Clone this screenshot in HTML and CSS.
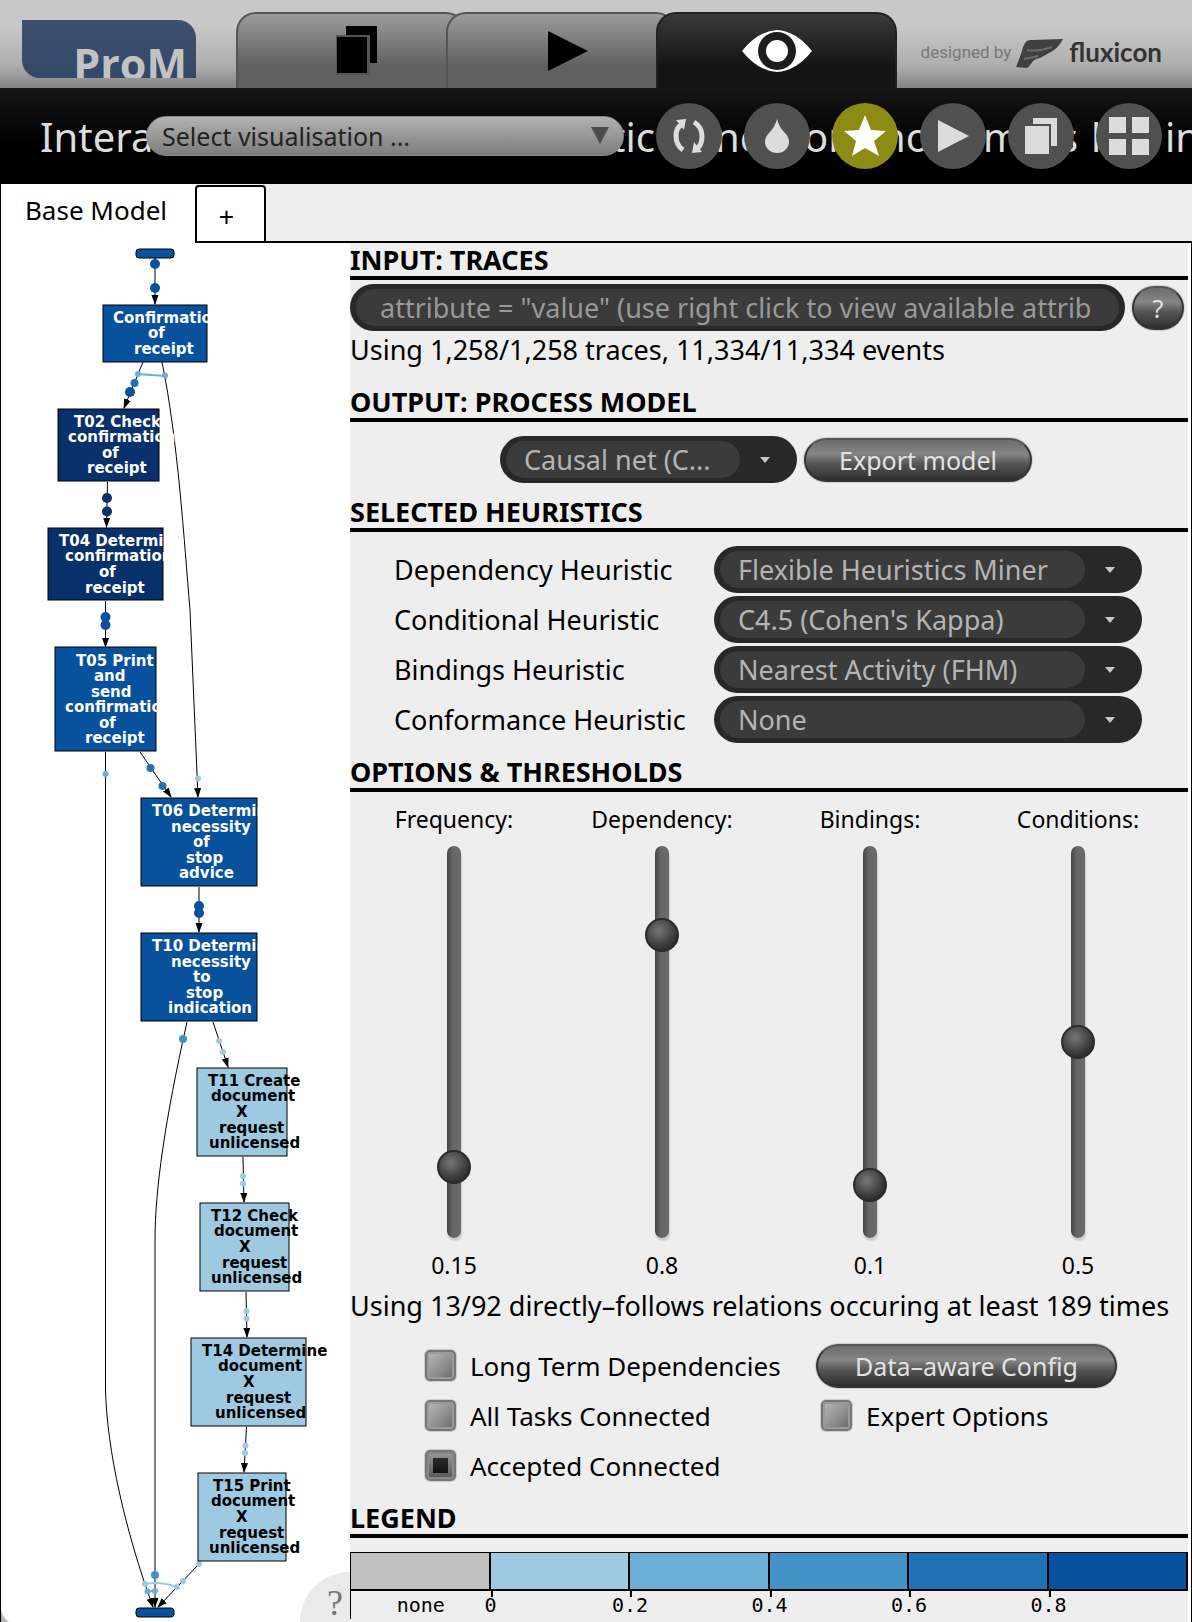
FILE: index.html
```html
<!DOCTYPE html>
<html lang="en">
<head>
<meta charset="utf-8">
<title>ProM</title>
<link rel="stylesheet" href="styles.css">
</head>
<body>
<header class="top">
  <div class="logo"><span>ProM</span></div>
  <nav class="views">
    <button class="view" aria-label="Workspace">
      <svg width="44" height="52" viewBox="0 0 44 52"><rect x="10" y="1" width="31" height="37" fill="#000"/><path d="M0 10H34V50H0Z" fill="#555"/><path d="M1 12H31V48H1Z" fill="#000"/></svg>
    </button>
    <button class="view" aria-label="Actions">
      <svg width="40" height="40" viewBox="0 0 40 40"><path d="M0 0L40 20L0 40Z" fill="#000"/></svg>
    </button>
    <button class="view active" aria-label="Views">
      <svg width="70" height="42" viewBox="0 0 70 42"><path d="M0 21Q16 1 35 0Q54 1 70 21Q54 41 35 42Q16 41 0 21Z" fill="#fff"/><circle cx="35" cy="21" r="19" fill="#1d1d1d"/><circle cx="35" cy="21" r="11" fill="#fff"/></svg>
    </button>
  </nav>
  <div class="credit">
    <span class="by">designed by</span>
    <svg class="mark" width="48" height="30" viewBox="0 0 48 30"><path d="M9 4Q11 1 15 1L47 0Q42 10 33 14Q28 17 24 19Q19 20 17 22Q13 28 11 29L0 28Q4 18 6 12Q7 7 9 4Z" fill="#404040"/><path d="M11 11Q22 13 36 8M8 20Q14 19 22 17" stroke="#6a6a6a" stroke-width="2" fill="none"/></svg>
    <span class="brand">fluxicon</span>
  </div>
</header>

<div class="bar">
  <svg class="bar-title" width="1192" height="96" role="heading" aria-level="1">
    <text x="40" y="64">Intera</text><text x="611" y="64">tic</text><text x="715" y="64">ne</text><text x="804" y="64">or</text><text x="881" y="64">no</text><text x="983" y="64">m</text><text x="1059" y="64">s</text><text x="1091" y="64">l</text><text x="1165" y="64">in</text>
  </svg>
  <div class="vis">
    <select aria-label="Visualisation"><option>Select visualisation ...</option></select>
  </div>
  <div class="tools">
    <button class="tool" aria-label="Refresh"><svg width="34" height="36" viewBox="0 0 34 36"><g fill="none" stroke="#dcdcdc" stroke-width="5"><path d="M11 32Q4 27 4 18Q4 10 9 7"/><path d="M22 4Q30 9 30 18Q30 26 26 30"/></g><path d="M4 2L14 1L12 12ZM30 34L20 35L22 24Z" fill="#dcdcdc"/></svg></button>
    <button class="tool" aria-label="Colour"><svg width="24" height="34" viewBox="0 0 24 34"><path d="M12 0Q14 8 20 14Q24 18 24 23A12 11 0 0 1 0 23Q0 18 4 14Q10 8 12 0Z" fill="#dcdcdc"/></svg></button>
    <button class="tool star" aria-label="Favourite"><svg width="44" height="42" viewBox="0 0 44 42"><path d="M22 0L28 15L43 16L31 26L36 41L22 33L9 41L13 26L1 16L16 15Z" fill="#fff"/></svg></button>
    <button class="tool" aria-label="Run"><svg width="32" height="34" viewBox="0 0 32 34"><path d="M1 1L32 17L1 33Z" fill="#dcdcdc"/></svg></button>
    <button class="tool" aria-label="Copy"><svg width="32" height="36" viewBox="0 0 32 36"><rect x="8" width="24" height="28" fill="#dcdcdc"/><path d="M0 6H26V36H0Z" fill="#505050"/><path d="M0 8H24V36H0Z" fill="#dcdcdc"/></svg></button>
    <button class="tool" aria-label="Overview"><svg width="40" height="38" viewBox="0 0 40 38"><path d="M0 0H17V16H0ZM23 0H40V16H23ZM0 22H17V38H0ZM23 22H40V38H23Z" fill="#dcdcdc"/></svg></button>
  </div>
</div>

<div class="tabs">
  <button class="tab base">Base Model</button>
  <button class="tab add">+</button>
  <div class="tabs-rest"></div>
</div>

<main class="main">
  <section class="graph" aria-label="Process graph">
    <svg width="349" height="1379" viewBox="1 243 349 1379">
      <defs>
        <marker id="arrow" viewBox="0 0 10 8" refX="9" refY="4" markerWidth="10" markerHeight="8" orient="auto" markerUnits="userSpaceOnUse"><path d="M0 0.5L10 4L0 7.5Z"/></marker>
      </defs>
      <g class="edges">
        <path d="M155 258V304"/>
        <path d="M143 362L124 408"/>
        <path d="M162 362C178 440 184 540 190 610L198 797"/>
        <path d="M107.500 482L106.500 527"/>
        <path d="M105.500 601V647"/>
        <path d="M140 752L171 797"/>
        <path d="M105.500 752V1390C107 1450 125 1530 153 1607"/>
        <path d="M199 887V932"/>
        <path d="M187 1022C165 1120 155 1190 155 1240V1607"/>
        <path d="M213 1022L228 1067"/>
        <path d="M243 1157L244 1202"/>
        <path d="M246 1292L247 1337"/>
        <path d="M246.500 1427L244 1472"/>
        <path d="M199 1564L158 1607"/>
      </g>
      <g fill="none" stroke-width="2">
        <path d="M138 374L165 376" stroke="#6baed6"/>
        <path d="M145 1584Q160 1581 177 1587" stroke="#9ecae1"/>
        <path d="M147 1591H155" stroke="#6baed6"/>
      </g>
      <g fill="#08519c"><circle cx="155" cy="264" r="5"/><circle cx="155" cy="288" r="5"/><circle cx="130" cy="392" r="5"/><circle cx="105.500" cy="617" r="5"/><circle cx="105.500" cy="625" r="5"/><circle cx="199" cy="906" r="5"/><circle cx="199" cy="913" r="5"/></g>
      <g fill="#08306b"><circle cx="107" cy="498" r="5"/><circle cx="107" cy="511.500" r="5"/></g>
      <g fill="#2171b5"><circle cx="134.500" cy="383" r="4"/><circle cx="150.500" cy="768" r="4"/><circle cx="162.500" cy="786" r="4"/></g>
      <g fill="#4292c6"><circle cx="183" cy="1039" r="4"/><circle cx="155" cy="1575" r="4"/></g>
      <g fill="#6baed6"><circle cx="138" cy="374" r="3"/><circle cx="165" cy="375.500" r="3"/><circle cx="105.500" cy="774" r="3"/><circle cx="147.500" cy="1591.500" r="3"/><circle cx="155" cy="1591" r="3"/></g>
      <g fill="#9ecae1"><circle cx="198" cy="778.500" r="3"/><circle cx="219" cy="1041" r="3"/><circle cx="223" cy="1052" r="3"/><circle cx="243" cy="1176" r="3"/><circle cx="243" cy="1183.500" r="3"/><circle cx="246.500" cy="1311" r="3"/><circle cx="246.500" cy="1318.500" r="3"/><circle cx="245.500" cy="1445.500" r="3"/><circle cx="245" cy="1453" r="3"/><circle cx="199" cy="1564" r="3"/><circle cx="183" cy="1581" r="3"/><circle cx="177" cy="1587" r="3"/><circle cx="145" cy="1584" r="3"/></g>
      <g class="node mid">
        <rect x="136" y="249" width="38" height="9" rx="3"/>
        <rect x="103" y="305" width="104" height="57"/>
        <rect x="55" y="647" width="101" height="104"/>
        <rect x="141" y="798" width="116" height="88"/>
        <rect x="141" y="933" width="116" height="88"/>
        <rect x="136" y="1608" width="38" height="9" rx="3"/>
      </g>
      <g class="node dark">
        <rect x="58" y="409" width="101" height="72"/>
        <rect x="48" y="528" width="115" height="72"/>
      </g>
      <g class="node light">
        <rect x="197" y="1068" width="90" height="88"/>
        <rect x="200" y="1203" width="89" height="88"/>
        <rect x="191" y="1338" width="115" height="88"/>
        <rect x="198" y="1473" width="88" height="88"/>
      </g>
      <g class="names on-dark">
        <text x="113" y="323">Confirmation</text><text x="148" y="338">of</text><text x="134" y="354">receipt</text>
        <text x="74" y="427">T02 Check</text><text x="68" y="442">confirmation</text><text x="102" y="458">of</text><text x="87" y="473">receipt</text>
        <text x="59" y="546">T04 Determine</text><text x="65" y="561">confirmation</text><text x="99" y="577">of</text><text x="85" y="593">receipt</text>
        <text x="76" y="666">T05 Print</text><text x="94" y="681">and</text><text x="91" y="697">send</text><text x="65" y="712">confirmation</text><text x="99" y="728">of</text><text x="85" y="743">receipt</text>
        <text x="152" y="816">T06 Determine</text><text x="171" y="832">necessity</text><text x="193" y="847">of</text><text x="186" y="863">stop</text><text x="179" y="878">advice</text>
        <text x="152" y="951">T10 Determine</text><text x="171" y="967">necessity</text><text x="193" y="982">to</text><text x="186" y="998">stop</text><text x="168" y="1013">indication</text>
      </g>
      <g class="names">
        <text x="208" y="1086">T11 Create</text><text x="211" y="1101">document</text><text x="236" y="1117">X</text><text x="219" y="1133">request</text><text x="209" y="1148">unlicensed</text>
        <text x="211" y="1221">T12 Check</text><text x="214" y="1236">document</text><text x="239" y="1252">X</text><text x="222" y="1268">request</text><text x="211" y="1283">unlicensed</text>
        <text x="202" y="1356">T14 Determine</text><text x="218" y="1371">document</text><text x="243" y="1387">X</text><text x="226" y="1403">request</text><text x="215" y="1418">unlicensed</text>
        <text x="213" y="1491">T15 Print</text><text x="211" y="1506">document</text><text x="236" y="1522">X</text><text x="219" y="1538">request</text><text x="209" y="1553">unlicensed</text>
      </g>
      <circle cx="350" cy="1622" r="50" fill="#eaeaea"/>
      <text class="help" x="327" y="1615">?</text>
      <path d="M1 1608Q2 1618 9 1622H1Z" fill="#b4b4b4"/>
    </svg>
  </section>

  <section class="panel">
    <h2>INPUT: TRACES</h2>
    <div class="filter">
      <div class="pill field"><input type="text" aria-label="Trace filter" placeholder="attribute = &quot;value&quot; (use right click to view available attrib"></div>
      <button class="btn round">?</button>
    </div>
    <p>Using 1,258/1,258 traces, 11,334/11,334 events</p>

    <h2 class="gap-large">OUTPUT: PROCESS MODEL</h2>
    <div class="output">
      <div class="pill arrow model"><select aria-label="Output model"><option>Causal net (C...</option></select></div>
      <button class="btn export">Export model</button>
    </div>

    <h2 class="gap">SELECTED HEURISTICS</h2>
    <div class="heuristics">
      <label for="h1">Dependency Heuristic</label>
      <div class="pill arrow"><select id="h1"><option>Flexible Heuristics Miner</option></select></div>
      <label for="h2">Conditional Heuristic</label>
      <div class="pill arrow"><select id="h2"><option>C4.5 (Cohen's Kappa)</option></select></div>
      <label for="h3">Bindings Heuristic</label>
      <div class="pill arrow"><select id="h3"><option>Nearest Activity (FHM)</option></select></div>
      <label for="h4">Conformance Heuristic</label>
      <div class="pill arrow"><select id="h4"><option>None</option></select></div>
    </div>

    <h2 class="gap">OPTIONS &amp; THRESHOLDS</h2>
    <div class="sliders">
      <div class="slider"><label for="s1">Frequency:</label><input id="s1" type="range" min="0" max="1" step="0.01" value="0.15"><output for="s1">0.15</output></div>
      <div class="slider"><label for="s2">Dependency:</label><input id="s2" type="range" min="0" max="1" step="0.01" value="0.8"><output for="s2">0.8</output></div>
      <div class="slider"><label for="s3">Bindings:</label><input id="s3" type="range" min="0" max="1" step="0.01" value="0.1"><output for="s3">0.1</output></div>
      <div class="slider"><label for="s4">Conditions:</label><input id="s4" type="range" min="0" max="1" step="0.01" value="0.5"><output for="s4">0.5</output></div>
    </div>
    <p class="relations">Using 13/92 directly–follows relations occuring at least 189 times</p>
    <div class="options">
      <label class="check"><input type="checkbox">Long Term Dependencies</label>
      <button class="btn config">Data–aware Config</button>
      <label class="check"><input type="checkbox">All Tasks Connected</label>
      <label class="check expert"><input type="checkbox">Expert Options</label>
      <label class="check"><input type="checkbox" checked>Accepted Connected</label>
    </div>

    <h2 class="gap">LEGEND</h2>
    <div class="legend">
      <div class="swatch c0"></div><div class="swatch c1"></div><div class="swatch c2"></div><div class="swatch c3"></div><div class="swatch c4"></div><div class="swatch c5"></div>
      <span class="none">none</span><span class="tick">0</span><span class="tick">0.2</span><span class="tick">0.4</span><span class="tick">0.6</span><span class="tick">0.8</span>
    </div>
  </section>
</main>
</body>
</html>
```
FILE: styles.css
```css
* { box-sizing: border-box; }

body {
  margin: 0;
  min-height: 100vh;
  display: flex;
  flex-direction: column;
  overflow-x: hidden;
  background: #eee;
  color: #000;
  font: 27px/34px "Noto Sans", sans-serif;
}

button, input, select { font: inherit; color: inherit; margin: 0; padding: 0; border: 0; }
button { cursor: pointer; }
h2, p { margin: 0; white-space: nowrap; }

/* header with logo and view tabs */
.top {
  display: flex;
  height: 88px;
  padding-left: 22px;
  background: linear-gradient(#c8c8c8 30%, #adadad 75%, #848484);
}
.logo {
  width: 174px;
  height: 58px;
  margin-top: 20px;
  overflow: hidden;
  border-radius: 0 18px 0 18px;
  background: linear-gradient(#3d5070, #334866);
  color: #c2c2c2;
  text-align: right;
  font: 700 43px/88px "Open Sans", sans-serif;
}
.logo span { margin-right: 9px; }
.views { display: flex; margin: 12px 0 0 40px; }
.view {
  display: grid;
  place-items: center;
  width: 230px;
  margin-right: -20px;
  padding-left: 14px;
  border: 2px solid #555;
  border-bottom: 0;
  border-radius: 20px 20px 0 0;
  background: linear-gradient(#9c9c9c, #606060 70%);
}
.view.active {
  width: 241px;
  margin-right: 0;
  padding-left: 0;
  border-color: #222;
  background: linear-gradient(#3a3a3a, #141414 70%);
}
.credit {
  display: flex;
  align-items: center;
  gap: 5px;
  height: 40px;
  margin: 32px 30px 0 auto;
  color: #777;
  line-height: 24px;
}
.by { font-family: Roboto, sans-serif; font-size: 17px; }
.mark { margin-top: 4px; }
.brand { font-family: Lato, sans-serif; font-size: 26px; font-weight: 700; color: #333; }

/* title bar: the title runs behind its controls */
.bar {
  position: relative;
  display: flex;
  align-items: center;
  height: 96px;
  padding: 0 30px 0 146px;
  background: linear-gradient(#151515, #000 60%);
}
.bar-title { position: absolute; left: 0; top: 0; fill: #dcdcdc; font-size: 40px; }
.vis {
  position: relative;
  flex: 1;
  height: 40px;
  overflow: hidden;
  border: 1px solid #888;
  border-radius: 20px;
  background: linear-gradient(#b2b2b2, #7c7c7c);
}
.vis select {
  appearance: none;
  width: 100%;
  height: 38px;
  padding-left: 15px;
  background: none;
  color: #222;
  font-size: 25px;
}
.vis::after {
  content: "";
  position: absolute;
  right: 14px;
  top: 10px;
  border: solid transparent;
  border-width: 17px 9px 0;
  border-top-color: #4c4c4c;
}
.tools { position: relative; display: flex; gap: 22px; margin-left: 32px; }
.tool {
  display: grid;
  place-items: center;
  width: 66px;
  height: 66px;
  border-radius: 50%;
  background: #505050;
}
.tool.star { background: #8c8c14; }

/* model tabs */
.tabs { display: flex; height: 59px; }
.tab { background: #fff; border: solid #000; }
.base { width: 195px; padding: 0 4px 8px 0; border-width: 0 0 0 1px; font-size: 26px; }
.add { width: 71px; border-width: 2px; border-radius: 4px 4px 0 0; padding: 6px 8px 0 0; margin-top: 1px; }
.tabs-rest { flex: 1; border-bottom: 2px solid #000; }

.main { display: flex; flex: 1; border: solid #000; border-width: 0 1px; }
.graph { width: 349px; background: #fff; }
.graph svg { display: block; }
.edges { fill: none; stroke: #000; stroke-width: 1px; }
.edges path { marker-end: url(#arrow); }
.node { stroke: #000; stroke-width: 1px; }
.mid { fill: #08519c; }
.dark { fill: #08306b; }
.light { fill: #9ecae1; }
.names { font: 700 15px "DejaVu Sans", sans-serif; fill: #000; }
.names.on-dark { fill: #fff; }
.help { font: 36px "Liberation Serif", serif; fill: #777; }

/* settings panel */
.panel { flex: 1; min-width: 0; border-right: 3px solid #fff; }
h2 {
  border-bottom: 4px solid #000;
  font-size: 27px;
  font-weight: 700;
  line-height: 33px;
}
.gap { margin-top: 12px; }
.gap-large { margin-top: 18px; }

.pill {
  position: relative;
  height: 47px;
  padding: 5px 6px;
  border-radius: 24px;
  background: #282828;
  color: #b4b4b4;
}
.pill input, .pill select {
  appearance: none;
  display: block;
  width: 100%;
  height: 37px;
  padding: 0 18px;
  border-radius: 19px;
  background: #3b3b3b;
}
.arrow { padding-right: 57px; }
.arrow::after {
  content: "";
  position: absolute;
  right: 27px;
  top: 21px;
  border: solid transparent;
  border-width: 6px 5px 0;
  border-top-color: #c8c8c8;
}
.filter { display: flex; align-items: center; gap: 7px; margin: 4px 4px 2px 0; }
.field { flex: 1; }
.pill input { padding: 0 20px 0 24px; }
.pill input::placeholder { color: #999; opacity: 1; }

.btn {
  height: 44px;
  border: 2px solid #333;
  border-top-color: #555;
  border-radius: 22px;
  background: linear-gradient(#6c6c6c, #858585 35%, #555 60%, #2e2e2e);
  box-shadow: 0 0 0 1px #d0d0d0;
  color: #e2e2e2;
  font-size: 25px;
  line-height: 36px;
}
.round { width: 52px; }
.output { display: flex; align-items: center; justify-content: center; gap: 7px; margin-top: 14px; padding-right: 6px; }
.model { width: 297px; }
.export { width: 228px; }

.heuristics {
  display: grid;
  grid-template-columns: 320px 1fr;
  row-gap: 3px;
  align-items: center;
  margin: 14px 46px 0 44px;
}

.sliders { display: grid; grid-template-columns: repeat(4, 1fr); margin-top: 12px; padding-right: 6px; font-size: 23px; line-height: 30px; }
.slider { display: flex; flex-direction: column; align-items: center; gap: 12px; }
.slider input {
  appearance: none;
  writing-mode: vertical-lr;
  direction: rtl;
  width: 34px;
  height: 392px;
  background: none;
}
.slider input::-webkit-slider-runnable-track {
  width: 14px;
  border-radius: 7px;
  background: linear-gradient(90deg, #444, #666 40%, #6a6a6a);
  box-shadow: 1px 3px 2px #ccc;
}
.slider input::-webkit-slider-thumb {
  appearance: none;
  width: 34px;
  height: 34px;
  margin-left: -10px;
  border: 2px solid #2c2c2c;
  border-radius: 50%;
  background: radial-gradient(circle at 40% 35%, #777, #444 50%, #181818);
}

.relations { margin-top: 9px; }
.options {
  display: grid;
  grid-template-columns: 391px 1fr;
  grid-auto-rows: 47px;
  row-gap: 3px;
  align-items: center;
  margin: 19px 0 0 75px;
  font-size: 26px;
}
.check { display: flex; align-items: center; gap: 14px; }
.expert { padding-left: 5px; }
.config { width: 301px; }
.check input {
  appearance: none;
  width: 31px;
  height: 31px;
  border: 2px solid #777;
  border-radius: 5px;
  background: linear-gradient(135deg, #bbb, #8c8c8c 60%, #666);
  box-shadow: inset 0 0 0 2px #9a9a9a, 0 0 0 1px #ccc;
}
.check input:checked {
  background: linear-gradient(#2a2a2a, #111) center / 15px 15px no-repeat, linear-gradient(#999, #555);
  box-shadow: inset 0 0 0 2px #888, 0 0 0 1px #ccc;
}

.legend {
  display: grid;
  grid-template-columns: repeat(6, 1fr);
  margin-top: 14px;
  border-left: 1px solid #000;
  font: 20px/28px "DejaVu Sans Mono", monospace;
}
.swatch { height: 39px; border: solid #000; border-width: 1px 2px 2px 0; }
.c0 { background: #c0c0c0; }
.c1 { background: #9ecae1; }
.c2 { background: #6baed6; }
.c3 { background: #4292c6; }
.c4 { background: #2171b5; }
.c5 { background: #08519c; }
.none { text-align: center; }
.tick { position: relative; justify-self: start; transform: translateX(-50%); }
.tick::before {
  content: "";
  position: absolute;
  left: 50%;
  top: 0;
  width: 2px;
  height: 6px;
  background: #000;
}
```
